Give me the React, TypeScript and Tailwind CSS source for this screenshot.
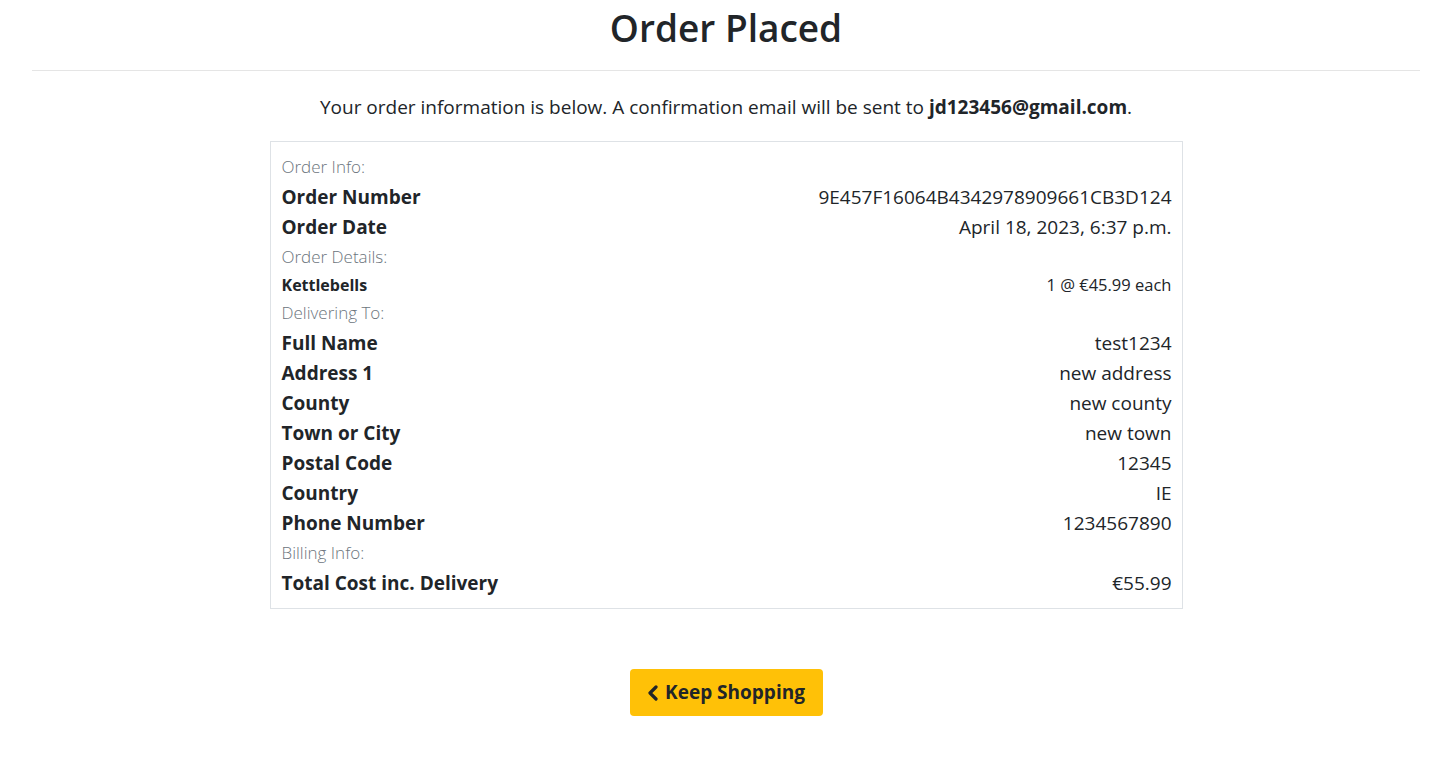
import React from "react";

const Label = ({ children }: { children: React.ReactNode }) => (
  <div className="h-[30px] flex items-center text-[17px] font-light text-[#6c757d]">{children}</div>
);

const Row = ({ k, v }: { k: string; v: string }) => (
  <div className="h-[30px] flex items-center justify-between text-[19px] text-[#212529]">
    <span className="font-bold">{k}</span>
    <span className="font-normal">{v}</span>
  </div>
);

export default function App() {
  return (
    <div className="min-h-[757px] bg-white text-[#212529]" style={{ fontFamily: '"Open Sans", "Noto Sans", sans-serif' }}>
      <div className="ml-[32px] mr-[27px] flex flex-col items-center">
        <h1 className="mt-[4px] text-[37px] font-semibold leading-[48px] text-[#212529]">Order Placed</h1>
        <hr className="mt-[18px] w-full border-t border-[#e5e5e5]" />
        <p className="mt-[22px] text-[19px] leading-[28px]">
          Your order information is below. A confirmation email will be sent to <strong>jd123456@gmail.com</strong>.
        </p>
        <div className="mt-[20px] w-[913px] border border-[#dee2e6] pl-[11px] pr-[10px] pt-[10px] pb-[10px]">
          <Label>Order Info:</Label>
          <Row k="Order Number" v="9E457F16064B4342978909661CB3D124" />
          <Row k="Order Date" v="April 18, 2023, 6:37 p.m." />
          <Label>Order Details:</Label>
          <div className="h-[26px] flex items-center justify-between text-[16px]">
            <span className="font-bold">Kettlebells</span>
            <span className="text-[16.5px]">1 @ €45.99 each</span>
          </div>
          <Label>Delivering To:</Label>
          <Row k="Full Name" v="test1234" />
          <Row k="Address 1" v="new address" />
          <Row k="County" v="new county" />
          <Row k="Town or City" v="new town" />
          <Row k="Postal Code" v="12345" />
          <Row k="Country" v="IE" />
          <Row k="Phone Number" v="1234567890" />
          <Label>Billing Info:</Label>
          <Row k="Total Cost inc. Delivery" v="€55.99" />
        </div>
        <button className="mt-[60px] h-[47px] w-[193px] rounded-[4px] bg-[#ffc107] flex items-center justify-center gap-[6px] text-[19px] font-bold text-[#212529]">
          <svg width="12" height="16" viewBox="0 0 12 16" fill="none">
            <path d="M9 2 L3 8 L9 14" stroke="#212529" strokeWidth="3.2" strokeLinecap="round" strokeLinejoin="round" />
          </svg>
          <span>Keep Shopping</span>
        </button>
      </div>
    </div>
  );
}
